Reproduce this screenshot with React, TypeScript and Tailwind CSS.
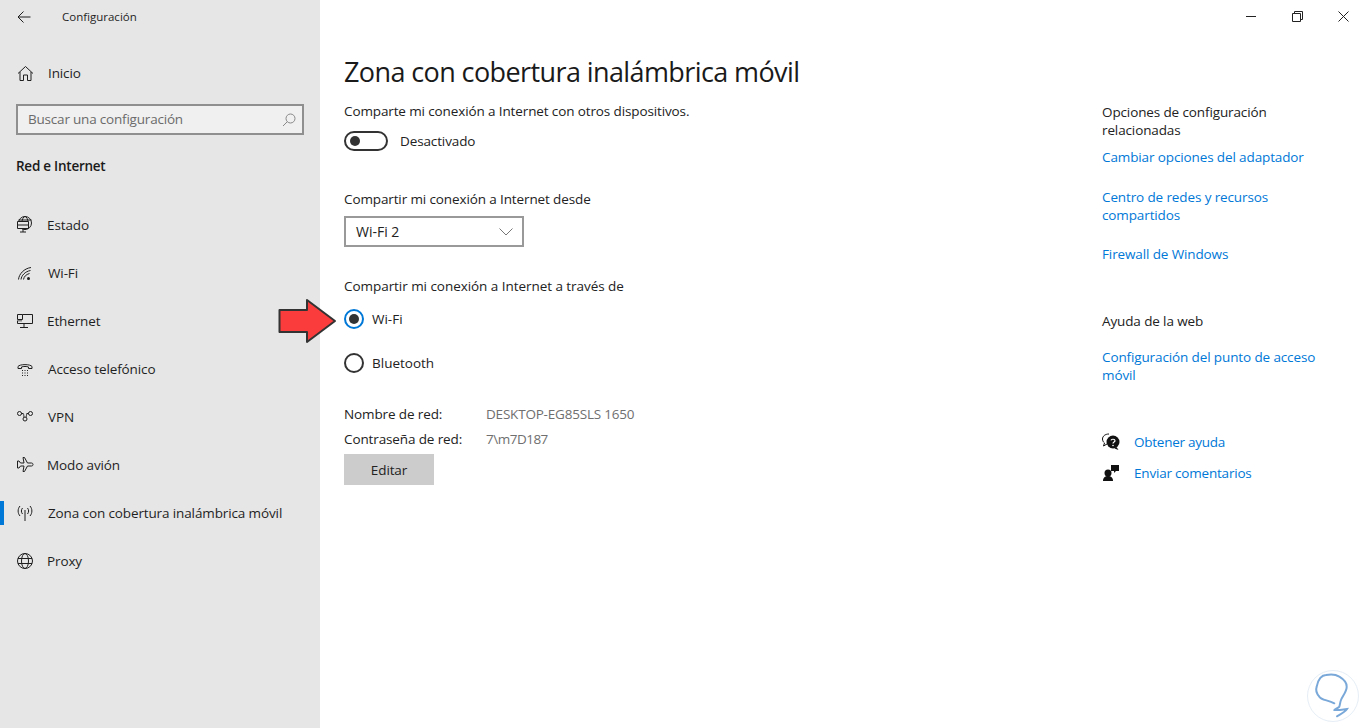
const font = "font-['Open_Sans','Noto_Sans',sans-serif]";

function Ic({ children }: { children: React.ReactNode }) {
  return (
    <svg width="18" height="18" viewBox="0 0 18 18" fill="none" stroke="#1f1f1f" strokeWidth="1" className="shrink-0">
      {children}
    </svg>
  );
}

const navItems = [
  {
    label: 'Estado',
    icon: (
      <Ic>
        <circle cx="9" cy="7" r="6.500" />
        <ellipse cx="9" cy="7" rx="3" ry="6.500" />
        <path d="M2.500 4h13" />
        <path d="M1.500 5.500h11v7h-11z" fill="#e6e6e6" />
        <path d="M1.500 9h11M4 16h6M7 12.500V16" />
      </Ic>
    ),
  },
  {
    label: 'Wi-Fi',
    indent: true,
    icon: (
      <Ic>
        <path d="M2.500 15.500C3 10 8 4.500 15 3.500M5 15.500C5.500 11.500 9 7.500 14.500 6.500M7.500 15.500c.5-3 2.500-5 6-6" />
        <circle cx="12.500" cy="14.500" r="1.500" fill="#1f1f1f" stroke="none" />
      </Ic>
    ),
  },
  {
    label: 'Ethernet',
    icon: (
      <Ic>
        <path d="M6.500 2.500h10v9h-15v-3" />
        <path d="M1.500 2.500h5v5h-5zM3 7.500v2M5 7.500v2M4 15.500h8M8 11.500v4" />
      </Ic>
    ),
  },
  {
    label: 'Acceso telefónico',
    indent: true,
    icon: (
      <Ic>
        <path d="M2 8.500V6.500C3.500 4 14.500 4 16 6.500v2h-3.500V7c-2-.7-5-.7-7 0v1.500z" />
        <path d="M6 10.500h1M8.500 10.500h1M11 10.500h1M6 13h1M8.500 13h1M11 13h1M6 15.500h1M8.500 15.500h1M11 15.500h1" />
      </Ic>
    ),
  },
  {
    label: 'VPN',
    indent: true,
    icon: (
      <Ic>
        <circle cx="3.500" cy="5.500" r="2" />
        <circle cx="14.500" cy="5.500" r="2" />
        <circle cx="9" cy="11" r="2" />
        <path d="M5.500 5.500c3 0 2 2 2.500 3.800M12.500 5.500c-3 0-1.500 2.500-2.500 3.800M5.500 5.500h2M10.500 5.500h2" />
      </Ic>
    ),
  },
  {
    label: 'Modo avión',
    icon: (
      <Ic>
        <path d="M7 1.500h1.500l3 5.500h4c2 0 2 3 0 3h-4l-3 5.500H7L8 10H4.500L3 12H1.500V5H3l1.500 2H8z" />
      </Ic>
    ),
  },
  {
    label: 'Zona con cobertura inalámbrica móvil',
    active: true,
    indent: true,
    icon: (
      <Ic>
        <path d="M4 2C1.500 5 1.500 9 4 12M14 2c2.500 3 2.500 7 0 10M6.500 4c-1.500 2-1.500 4 0 6M11.500 4c1.500 2 1.500 4 0 6M9 6v11" />
      </Ic>
    ),
  },
  {
    label: 'Proxy',
    icon: (
      <Ic>
        <circle cx="9" cy="9" r="7.500" />
        <ellipse cx="9" cy="9" rx="3.500" ry="7.500" />
        <path d="M2 6.500h14M2 11.500h14" />
      </Ic>
    ),
  },
];

function Sidebar() {
  return (
    <aside className="w-[320px] shrink-0 bg-[#e6e6e6] flex flex-col">
      <div className="h-[33px] flex items-center pl-[16px]">
        <svg width="16" height="16" viewBox="0 0 16 16" fill="none" stroke="#1f1f1f" strokeWidth="1">
          <path d="M14.500 8H2M7.500 2.500 2 8l5.500 5.500" />
        </svg>
        <span className="ml-[30px] text-[11.500px] tracking-normal text-[#1f1f1f]">Configuración</span>
      </div>
      <div className="mt-[16px] h-[48px] flex items-center pl-[17px]">
        <svg width="17" height="17" viewBox="0 0 17 17" fill="none" stroke="#1f1f1f" strokeWidth="1">
          <path d="M1 8.500 8.500 1.500l7.500 7M3 7v8.500h3.500V10h4v5.500H14V7" />
        </svg>
        <span className="ml-[14px] text-[13.500px] text-[#1f1f1f]">Inicio</span>
      </div>
      <div className="mx-[16px] mt-[7px] h-[31px] border-2 border-[#8f8f8f] bg-[#f0f0f0] flex items-center justify-between pl-[10px] pr-[6px]">
        <span className="text-[13.500px] tracking-[-0.2px] text-[#6b6b6b]">Buscar una configuración</span>
        <svg width="14" height="14" viewBox="0 0 14 14" fill="none" stroke="#888" strokeWidth="1">
          <circle cx="8.500" cy="5.500" r="4.500" />
          <path d="M5.200 8.800 1 13" />
        </svg>
      </div>
      <div className="mt-[20px] pl-[16px] text-[13.500px] tracking-[-0.25px] font-semibold text-[#1a1a1a] leading-[22px]">Red e Internet</div>
      <nav className="mt-[24px] flex flex-col">
        {navItems.map((item) => (
          <div key={item.label} className="relative h-[48px] flex items-center pl-[16px]">
            {item.active && <div className="absolute left-0 top-[12px] h-[24px] w-[4px] bg-[#0078d7]" />}
            {item.icon}
            <span className={`${item.indent ? 'ml-[14px]' : 'ml-[13px]'} text-[13.500px] text-[#1f1f1f] whitespace-nowrap`}>{item.label}</span>
          </div>
        ))}
      </nav>
    </aside>
  );
}

function WindowControls() {
  return (
    <div className="flex justify-end h-[33px] items-center">
      <div className="w-[46px] flex justify-center">
        <div className="w-[10px] h-px bg-[#222]" />
      </div>
      <div className="w-[46px] flex justify-center">
        <svg width="11" height="11" viewBox="0 0 11 11" fill="none" stroke="#222" strokeWidth="1">
          <path d="M.500 2.500h8v8h-8zM2.500 2.500v-2h8v8h-2" />
        </svg>
      </div>
      <div className="w-[46px] flex justify-center">
        <svg width="11" height="11" viewBox="0 0 11 11" fill="none" stroke="#222" strokeWidth="1">
          <path d="M.500.500l10 10M10.500.500l-10 10" />
        </svg>
      </div>
    </div>
  );
}

function Radio({ label, checked }: { label: string; checked?: boolean }) {
  return (
    <div className="flex items-center h-[20px]">
      <div className={`w-[20px] h-[20px] rounded-full border-2 flex items-center justify-center ${checked ? 'border-[#0078d7]' : 'border-[#333]'}`}>
        {checked && <div className="w-[10px] h-[10px] rounded-full bg-[#333]" />}
      </div>
      <span className="ml-[8px] text-[13.500px] tracking-normal text-[#222]">{label}</span>
    </div>
  );
}

function Link({ children, className = '' }: { children: React.ReactNode; className?: string }) {
  return <div className={`text-[13.500px] leading-[18px] text-[#0078d7] ${className}`}>{children}</div>;
}

function Content() {
  return (
    <section className="w-[758px] shrink-0 pl-[24px] text-[13.500px] text-[#222]">
      <h1 className="mt-[16px] text-[27px] tracking-[-0.6px] leading-[46px] text-[#1a1a1a] whitespace-nowrap">Zona con cobertura inalámbrica móvil</h1>
      <p className="mt-[6px] leading-[20px]">Comparte mi conexión a Internet con otros dispositivos.</p>
      <div className="mt-[10px] flex items-center">
        <div className="w-[44px] h-[20px] rounded-full border-2 border-[#333] flex items-center pl-[4px]">
          <div className="w-[10px] h-[10px] rounded-full bg-[#333]" />
        </div>
        <span className="ml-[12px]">Desactivado</span>
      </div>
      <p className="mt-[38px] leading-[20px]">Compartir mi conexión a Internet desde</p>
      <div className="mt-[7px] w-[180px] h-[31px] border-2 border-[#999] flex items-center justify-between pl-[10px] pr-[9px]">
        <span className="text-[14px] tracking-normal">Wi-Fi 2</span>
        <svg width="14" height="8" viewBox="0 0 14 8" fill="none" stroke="#777" strokeWidth="1">
          <path d="M.500.500 7 7l6.500-6.500" />
        </svg>
      </div>
      <p className="mt-[29px] leading-[20px] tracking-[-0.05px]">Compartir mi conexión a Internet a través de</p>
      <div className="mt-[13px]">
        <Radio label="Wi-Fi" checked />
      </div>
      <div className="mt-[24px]">
        <Radio label="Bluetooth" />
      </div>
      <dl className="mt-[31px] flex flex-col gap-[5px] leading-[20px]">
        <div className="flex">
          <dt className="w-[142px]">Nombre de red:</dt>
          <dd className="text-[#6f6f6f] tracking-[-0.2px]">DESKTOP-EG85SLS 1650</dd>
        </div>
        <div className="flex">
          <dt className="w-[142px]">Contraseña de red:</dt>
          <dd className="text-[#6f6f6f] tracking-[-0.5px]">7\m7D187</dd>
        </div>
      </dl>
      <div className="mt-[5px] w-[90px] h-[31px] bg-[#cccccc] flex items-center justify-center">Editar</div>
    </section>
  );
}

function Related() {
  return (
    <section className="flex-1 pl-[24px] text-[13.500px] text-[#222]">
      <p className="mt-[70px] leading-[18px]">
        Opciones de configuración
        <br />
        relacionadas
      </p>
      <Link className="mt-[9px]">Cambiar opciones del adaptador</Link>
      <Link className="mt-[22px]">
        Centro de redes y recursos
        <br />
        compartidos
      </Link>
      <Link className="mt-[21px]">Firewall de Windows</Link>
      <p className="mt-[49px] leading-[18px]">Ayuda de la web</p>
      <Link className="mt-[18px]">
        Configuración del punto de acceso
        <br />
        móvil
      </Link>
      <div className="mt-[49px] flex items-center h-[18px]">
        <svg width="18" height="18" viewBox="0 0 18 18" className="shrink-0">
          <path d="M7 1C3 1 .5 3.300.5 6c0 1.700.8 3 2 4l-1 3 3.500-2" fill="none" stroke="#111" />
          <circle cx="11" cy="9" r="6.500" fill="#111" />
          <path d="M14.500 14l2 3-4-1.500z" fill="#111" />
          <path d="M9 7.300c.3-1.500 4-1.500 4 .5 0 1.300-2 1.300-2 2.700" fill="none" stroke="#fff" strokeWidth="1.200" />
          <circle cx="11" cy="12.500" r=".8" fill="#fff" />
        </svg>
        <Link className="ml-[14px] tracking-[-0.25px]">Obtener ayuda</Link>
      </div>
      <div className="mt-[13px] flex items-center h-[18px]">
        <svg width="18" height="18" viewBox="0 0 18 18" className="shrink-0" fill="#111">
          <path d="M9 1h8v6h-3l-2 2V7H9z" />
          <circle cx="6" cy="9" r="3.500" />
          <path d="M1 17c0-3.500 2-5 5-5s5 1.500 5 5z" />
        </svg>
        <Link className="ml-[14px] tracking-[-0.2px]">Enviar comentarios</Link>
      </div>
    </section>
  );
}

export default function App() {
  return (
    <div className={`relative w-[1366px] h-[728px] overflow-hidden bg-white flex tracking-[-0.12px] ${font}`}>
      <Sidebar />
      <main className="flex-1 flex flex-col">
        <WindowControls />
        <div className="flex flex-1">
          <Content />
          <Related />
        </div>
      </main>
      {/* red arrow annotation */}
      <svg width="60" height="46" viewBox="0 0 60 46" className="absolute left-[278px] top-[298px]">
        <path d="M1.500 12H29V2l28 21-28 21V34H1.500z" fill="#fb3c3c" stroke="#333" strokeWidth="2" strokeLinejoin="round" />
      </svg>
      {/* watermark */}
      <svg width="54" height="54" viewBox="0 0 54 54" className="absolute left-[1306px] top-[669px]">
        <circle cx="27" cy="27" r="25.500" fill="none" stroke="#e6eef6" strokeWidth="1" />
        <path d="M28.300 34.300C22 31 15 31 13.300 27.700 10 24 9.500 21 10.700 17.700 12 10 16 6 20 6c5-1 10-.5 13.300 1.700 5 3 7.500 6 7.400 10 0 5-4 9-5.700 13.300-1 2.500-1 5-1.700 6.700-1.500 1.500-5 2.500-5 3.300 3 .5 9-.5 12.700-1-2 3-7 5.500-10 7.300" fill="none" stroke="#7aa9d9" strokeWidth="2" strokeLinecap="round" />
      </svg>
    </div>
  );
}
